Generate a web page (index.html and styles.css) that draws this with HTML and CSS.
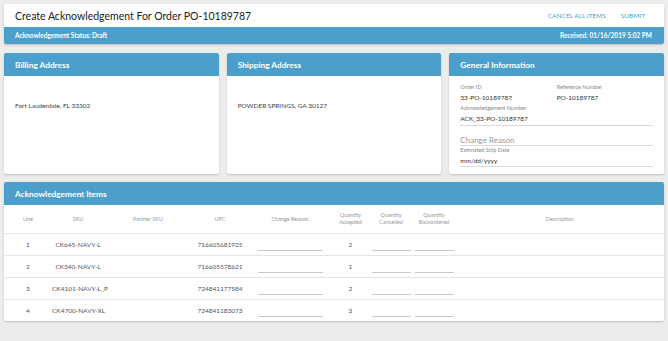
FILE: index.html
```html
<!DOCTYPE html>
<html lang="en">
<head>
    <meta charset="UTF-8">
    <title>Create Acknowledgement</title>
    <link rel="stylesheet" href="styles.css">
</head>
<body>
    <div class="card top">
        <div class="top-bar">
            <h1 class="page-title">Create Acknowledgement For Order PO-10189787</h1>
            <div class="actions">
                <button class="link-btn">CANCEL ALL ITEMS</button>
                <button class="link-btn">SUBMIT</button>
            </div>
        </div>
        <div class="status-bar">
            <span>Acknowledgement Status: Draft</span>
            <span>Received: 01/16/2019 5:02 PM</span>
        </div>
    </div>

    <div class="cards">
        <div class="card info-card">
            <div class="card-head">Billing Address</div>
            <div class="address">Fort Lauderdale, FL 33302</div>
        </div>
        <div class="card info-card">
            <div class="card-head">Shipping Address</div>
            <div class="address">POWDER SPRINGS, GA 30127</div>
        </div>
        <div class="card info-card">
            <div class="card-head">General Information</div>
            <div class="general">
                <div class="pair">
                    <div class="field">
                        <div class="label">Order ID</div>
                        <div class="value">33-PO-10189787</div>
                    </div>
                    <div class="field">
                        <div class="label">Reference Number</div>
                        <div class="value">PO-10189787</div>
                    </div>
                </div>
                <div class="field underlined ack">
                    <div class="label">Acknowledgement Number</div>
                    <div class="value">ACK_33-PO-10189787</div>
                </div>
                <div class="field underlined reason">Change Reason</div>
                <div class="field underlined">
                    <div class="label">Estimated Ship Date</div>
                    <div class="value">mm/dd/yyyy</div>
                </div>
            </div>
        </div>
    </div>

    <div class="card items">
        <div class="card-head">Acknowledgement Items</div>
        <table class="items-table">
            <colgroup>
                <col style="width:48px"><col style="width:52px"><col style="width:88px">
                <col style="width:56px"><col style="width:84px"><col style="width:37px">
                <col style="width:44px"><col style="width:42px"><col>
            </colgroup>
            <thead>
                <tr>
                    <th>Line</th><th>SKU</th><th>Partner SKU</th><th>UPC</th><th>Change Reason</th>
                    <th>Quantity<br>Accepted</th><th>Quantity<br>Cancelled</th><th>Quantity<br>Backordered</th>
                    <th>Description</th>
                </tr>
            </thead>
            <tbody>
                <tr>
                    <td>1</td><td>CK645-NAVY-L</td><td></td><td>716605681925</td>
                    <td><span class="line-input wide"></span></td><td>2</td>
                    <td><span class="line-input"></span></td><td><span class="line-input"></span></td><td></td>
                </tr>
                <tr>
                    <td>2</td><td>CK340-NAVY-L</td><td></td><td>716605578621</td>
                    <td><span class="line-input wide"></span></td><td>1</td>
                    <td><span class="line-input"></span></td><td><span class="line-input"></span></td><td></td>
                </tr>
                <tr>
                    <td>3</td><td>CK4101-NAVY-L_P</td><td></td><td>724841177584</td>
                    <td><span class="line-input wide"></span></td><td>2</td>
                    <td><span class="line-input"></span></td><td><span class="line-input"></span></td><td></td>
                </tr>
                <tr>
                    <td>4</td><td>CK4700-NAVY-XL</td><td></td><td>724841183073</td>
                    <td><span class="line-input wide"></span></td><td>3</td>
                    <td><span class="line-input"></span></td><td><span class="line-input"></span></td><td></td>
                </tr>
            </tbody>
        </table>
    </div>
</body>
</html>
```

FILE: styles.css
```css
body {
    font-family: Lato, 'Open Sans', sans-serif;
    margin: 0;
    padding: 4px;
    background-color: #ececec;
    color: #444;
}

.card {
    background-color: #fff;
    border-radius: 2px;
    box-shadow: 0 1px 2px rgba(0, 0, 0, 0.2);
    overflow: hidden;
}

.top-bar {
    height: 23px;
    display: flex;
    align-items: center;
    justify-content: space-between;
    padding: 0 19px 0 11px;
}

.page-title {
    margin: 0;
    font-size: 10.5px;
    font-weight: normal;
    color: #222;
}

.actions {
    display: flex;
    gap: 15px;
}

.link-btn {
    border: none;
    background: none;
    padding: 0;
    font-family: Lato, sans-serif;
    font-size: 6.5px;
    color: #4b9fcc;
}

.status-bar {
    height: 17px;
    background-color: #4b9fcc;
    color: #fff;
    font-size: 6.5px;
    font-weight: bold;
    display: flex;
    align-items: center;
    justify-content: space-between;
    padding: 0 12px 0 11px;
}

.cards {
    display: flex;
    gap: 8px;
    margin-top: 9px;
}

.info-card {
    flex: 1;
    height: 121px;
}

.card-head {
    height: 23px;
    background-color: #4b9fcc;
    color: #fff;
    font-size: 8.3px;
    font-weight: bold;
    display: flex;
    align-items: center;
    padding-left: 11px;
}

.address {
    padding: 26px 11px 0;
    font-size: 6.5px;
    color: #444;
}

.general {
    padding: 7px 11px 0;
}

.pair {
    display: flex;
    margin-bottom: 1px;
}

.pair .field {
    flex: 1;
}

.label {
    font-size: 5.5px;
    color: #888;
    line-height: 9px;
}

.value {
    font-size: 6.5px;
    color: #333;
    line-height: 11px;
}

.underlined {
    border-bottom: 1px solid #d9d9d9;
}

.ack {
    padding-bottom: 1px;
}

.reason {
    margin-top: 9px;
    font-size: 8px;
    color: #999;
    line-height: 10px;
}

.items {
    margin-top: 8px;
}

.items-table {
    width: 100%;
    border-collapse: collapse;
    table-layout: fixed;
    font-size: 6.5px;
    color: #555;
}

.items-table th {
    height: 26px;
    font-size: 5.5px;
    font-weight: normal;
    color: #999;
    line-height: 7px;
    text-align: center;
    border-bottom: 1px solid #e4e4e4;
}

.items-table td {
    height: 21px;
    padding: 0;
    text-align: center;
    white-space: nowrap;
    border-bottom: 1px solid #e4e4e4;
}

.items-table tbody tr:last-child td {
    border-bottom: none;
}

.line-input {
    display: inline-block;
    width: 39px;
    height: 1px;
    background-color: #c8c8c8;
    vertical-align: -6px;
}

.line-input.wide {
    width: 65px;
}
```
